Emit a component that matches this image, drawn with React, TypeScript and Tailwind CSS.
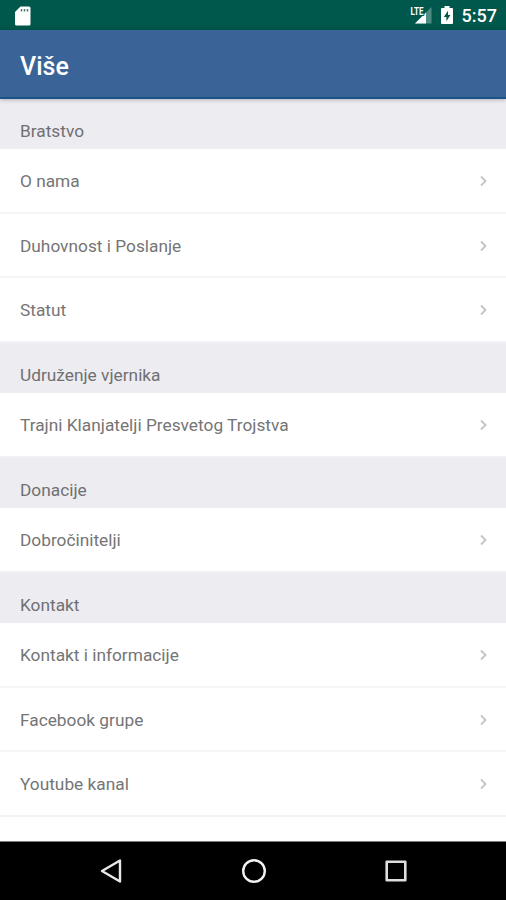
const sections = [
  { title: 'Bratstvo', items: ['O nama', 'Duhovnost i Poslanje', 'Statut'] },
  { title: 'Udruženje vjernika', items: ['Trajni Klanjatelji Presvetog Trojstva'] },
  { title: 'Donacije', items: ['Dobročinitelji'] },
  { title: 'Kontakt', items: ['Kontakt i informacije', 'Facebook grupe', 'Youtube kanal'] },
]

function StatusBar() {
  return (
    <div className="flex h-[30px] shrink-0 items-center bg-[#00574b] pr-[9px] pl-[14px] text-white">
      <svg width="17" height="20" viewBox="0 0 17 20" className="mt-px">
        <path d="M6.500 0.500H15a1.500 1.500 0 0 1 1.500 1.500v16a1.500 1.500 0 0 1-1.500 1.500H2.500A1.500 1.500 0 0 1 1 18V6z" fill="#fff" />
        <path d="M7.500 3v2.500M10.500 3v2.500M13.500 3v2.500" stroke="#4c7a70" strokeWidth="1.500" />
      </svg>

      <div className="ml-auto flex items-center">
        <svg width="23" height="20" viewBox="0 0 23 20" className="mr-[9px]">
          <path d="M22.500 2v16.500H6z" fill="#4f8c82" />
          <path d="M17 7.500v11H6z" fill="#fff" />
          <text x="1.500" y="9.500" fontSize="11" fontWeight="700" textLength="13" lengthAdjust="spacingAndGlyphs" fontFamily="Roboto, sans-serif" fill="#fff" stroke="#00574b" strokeWidth="2" paintOrder="stroke">
            LTE
          </text>
        </svg>
        <svg width="12" height="18" viewBox="0 0 12 19" preserveAspectRatio="none" className="mr-[9px]">
          <path d="M3.500 0h5v2H11a1 1 0 0 1 1 1v15a1 1 0 0 1-1 1H1a1 1 0 0 1-1-1V3a1 1 0 0 1 1-1h2.500z" fill="#fff" />
          <path d="M7 5L2.800 11.500h2.600V16L9.400 9.500H7z" fill="#00574b" />
        </svg>
        <span className="mt-0.5 text-[18px] leading-none font-medium">5:57</span>
      </div>
    </div>
  )
}

function Row({ label }: { label: string }) {
  return (
    <div className="flex h-[64.5px] shrink-0 items-center justify-between border-b-2 border-[#f5f5f6] bg-white pt-[2.5px] pr-[18px] pl-5 last:border-[#f2f1f5] [&:not(:first-of-type)]:pt-[3.5px]">
      <span className="text-[17.3px] text-[#757575]">{label}</span>
      <svg width="9" height="12" viewBox="0 0 9 12" className="-mt-[2px]" fill="none" stroke="#c4c4c4" strokeWidth="1.800">
        <path d="M2 1.500L6.500 6L2 10.500" />
      </svg>
    </div>
  )
}

function NavBar() {
  return (
    <div className="flex h-[59px] shrink-0 items-center justify-between border-t border-[#7c7c7c] bg-black pr-[98px] pl-[99px]">
      <svg width="24" height="26" viewBox="0 0 24 26" fill="none" stroke="#e8e8e8" strokeWidth="2.400" strokeLinejoin="round">
        <path d="M21 2.500v21L3 13z" />
      </svg>
      <svg width="26" height="26" viewBox="0 0 26 26" fill="none" stroke="#f2f2f2" strokeWidth="2.400">
        <circle cx="13" cy="13" r="10.800" />
      </svg>
      <svg width="24" height="24" viewBox="0 0 24 24" fill="none" stroke="#dedede" strokeWidth="2.600" strokeLinejoin="round">
        <rect x="2.700" y="2.700" width="18.600" height="18.600" />
      </svg>
    </div>
  )
}

export default function App() {
  return (
    <main className="flex h-[900px] w-[506px] flex-col overflow-hidden bg-white font-['Roboto',sans-serif]">
      <StatusBar />
      <header className="relative z-10 flex h-[69px] shrink-0 items-center border-b-2 border-[#1c5389] bg-[#3a6398] pt-[5px] pl-5 shadow-[0_1px_4px_rgba(0,0,0,0.25)]">
        <h1 className="text-[25px] leading-none font-medium text-white">Više</h1>
      </header>

      <div className="flex min-h-0 flex-1 flex-col overflow-hidden">
        {sections.map((section, index) => (
          <section key={section.title} className="shrink-0">
            <h2
              className={`flex items-end bg-[#edecf1] pb-1 pl-5 text-[17.3px] text-[#707073] ${
                index === 0 ? 'h-[50px]' : 'h-[50.5px]'
              }`}
            >
              {section.title}
            </h2>
            {section.items.map((item) => (
              <Row key={item} label={item} />
            ))}
          </section>
        ))}
      </div>

      <NavBar />
    </main>
  )
}
